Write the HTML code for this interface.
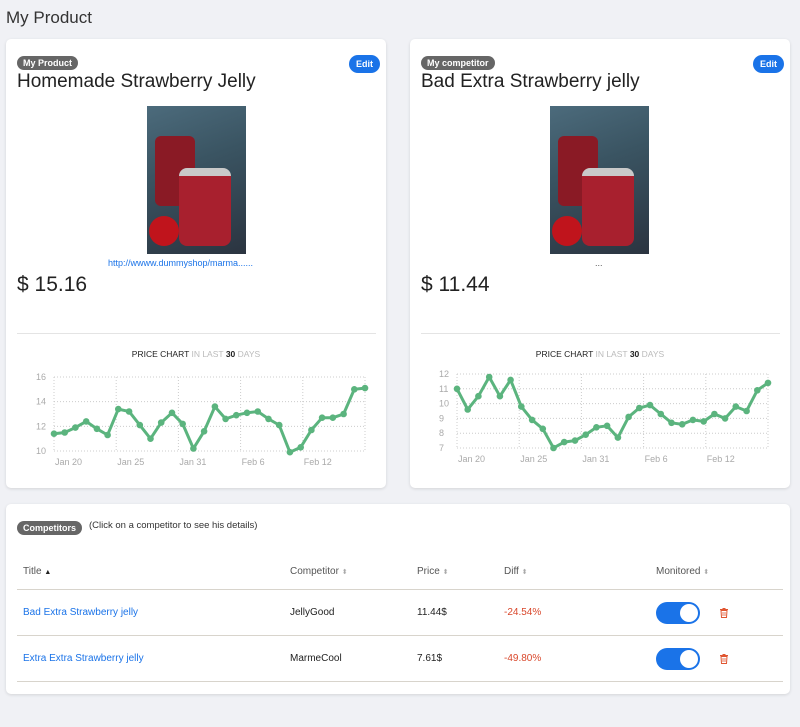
<!DOCTYPE html><html><head><meta charset="utf-8"><style>
body{margin:0;background:#f0f1f5;font-family:"Liberation Sans",sans-serif;width:800px;height:682px;overflow:hidden;position:relative;color:#222}
.h{position:absolute;left:6px;top:8px;font-size:17px;color:#333}
.card{position:absolute;background:#fff;border-radius:5px;box-shadow:0 1px 3px rgba(0,0,0,.12)}
.badge{position:absolute;background:#666;color:#fff;font-size:9px;font-weight:bold;border-radius:8px;padding:2px 6px}
.edit{position:absolute;background:#1a73e8;color:#fff;font-size:9px;font-weight:bold;border-radius:10px;padding:4px 7px}
.t{position:absolute;font-size:19px;color:#222}
.img{position:absolute;width:99px;height:148px;background:linear-gradient(160deg,#4c6b7c 0%,#3a5462 40%,#2b3440 100%);overflow:hidden}
.img .j1{position:absolute;left:8px;top:30px;width:40px;height:70px;background:#8a1a25;border-radius:6px}
.img .j2{position:absolute;left:32px;top:62px;width:52px;height:70px;background:#a8202e;border-radius:8px;border-top:8px solid #c9c9c9}
.img .s{position:absolute;left:2px;top:110px;width:30px;height:30px;background:#c0141c;border-radius:50%}
.price{position:absolute;font-size:21px}
.hr{position:absolute;height:1px;background:#e4e4e4}
.ct{position:absolute;font-size:8.5px;width:380px;text-align:center;color:#222}
.ct span{color:#bbb}
table{position:absolute;left:17px;top:553px;width:766px;border-collapse:collapse;font-size:10px}
td{height:45px;border-top:1px solid #d8d4cc;padding-left:6px;padding-top:0;padding-bottom:0}
th{height:34px;text-align:left;font-weight:normal;color:#555;padding-left:6px}
.tg{display:inline-block;width:44px;height:22px;background:#1a73e8;border-radius:11px;position:relative;vertical-align:middle}
.tg:after{content:"";position:absolute;right:2px;top:2px;width:18px;height:18px;border-radius:50%;background:#fff}
.tr{vertical-align:middle;margin-left:20px}
</style></head><body>
<div class="h">My Product</div>
<div class="card" style="left:6px;top:39px;width:380px;height:449px"></div>
<div class="card" style="left:410px;top:39px;width:380px;height:449px"></div>
<div class="card" style="left:6px;top:504px;width:784px;height:190px"></div>

<div class="badge" style="left:17px;top:56px">My Product</div>
<div class="edit" style="left:349px;top:55px">Edit</div>
<div class="t" style="left:17px;top:71px">Homemade Strawberry Jelly</div>
<div class="img" style="left:147px;top:106px"><div class="j1"></div><div class="j2"></div><div class="s"></div></div>
<div style="position:absolute;left:108px;top:258px;font-size:9px;color:#1a73e8">http://wwww.dummyshop/marma......</div>
<div class="price" style="left:17px;top:273px">$ 15.16</div>
<div class="hr" style="left:17px;top:333px;width:359px"></div>
<div class="ct" style="left:6px;top:349px">PRICE CHART <span>IN LAST</span> <b>30</b> <span>DAYS</span></div>

<div class="badge" style="left:421px;top:56px">My competitor</div>
<div class="edit" style="left:753px;top:55px">Edit</div>
<div class="t" style="left:421px;top:71px">Bad Extra Strawberry jelly</div>
<div class="img" style="left:550px;top:106px"><div class="j1"></div><div class="j2"></div><div class="s"></div></div>
<div style="position:absolute;left:595px;top:258px;font-size:9px;color:#555">...</div>
<div class="price" style="left:421px;top:273px">$ 11.44</div>
<div class="hr" style="left:421px;top:333px;width:359px"></div>
<div class="ct" style="left:410px;top:349px">PRICE CHART <span>IN LAST</span> <b>30</b> <span>DAYS</span></div>

<svg id="sv" width="800" height="682" style="position:absolute;left:0;top:0" font-family="Liberation Sans" font-size="9" fill="#aaa"></svg>

<div class="badge" style="left:17px;top:521px;font-weight:bold">Competitors</div>
<div style="position:absolute;left:89px;top:520px;font-size:9.5px;color:#333">(Click on a competitor to see his details)</div>
<table>
<tr><th style="width:260px">Title <span style="color:#222;font-size:7px">▲</span></th><th style="width:120px">Competitor <span style="color:#aaa;font-size:7px">⬍</span></th><th style="width:80px">Price <span style="color:#aaa;font-size:7px">⬍</span></th><th style="width:145px">Diff <span style="color:#aaa;font-size:7px">⬍</span></th><th>Monitored <span style="color:#aaa;font-size:7px">⬍</span></th></tr>
<tr><td style="color:#1a73e8">Bad Extra Strawberry jelly</td><td>JellyGood</td><td>11.44$</td><td style="color:#d9472b">-24.54%</td><td><span class="tg"></span><svg class="tr" width="8" height="10" viewBox="0 0 8 10"><path d="M0 1.5H8M3 1.5V0.5H5V1.5M1 2.5H7L6.5 9.5H1.5Z" fill="none" stroke="#e05530" stroke-width="1"/><path d="M3 4V8M5 4V8" stroke="#e05530" stroke-width=".8"/></svg></td></tr>
<tr><td style="color:#1a73e8">Extra Extra Strawberry jelly</td><td>MarmeCool</td><td>7.61$</td><td style="color:#d9472b">-49.80%</td><td><span class="tg"></span><svg class="tr" width="8" height="10" viewBox="0 0 8 10"><path d="M0 1.5H8M3 1.5V0.5H5V1.5M1 2.5H7L6.5 9.5H1.5Z" fill="none" stroke="#e05530" stroke-width="1"/><path d="M3 4V8M5 4V8" stroke="#e05530" stroke-width=".8"/></svg></td></tr>
<tr><td style="height:4px"></td><td></td><td></td><td></td><td></td></tr>
</table>
<script>
var s='';
function chart(x0,x1,yl,yt,yb,vmax,vmin,vals,xl,xs){
 for(var i=0;i<yl.length;i++){var y=yt+(yb-yt)*i/(yl.length-1);
  s+='<line x1="'+x0+'" x2="'+x1+'" y1="'+y+'" y2="'+y+'" stroke="#ccc" stroke-dasharray="1,2"/>';
  s+='<text x="'+(x0-18)+'" y="'+(y+3)+'">'+yl[i]+'</text>';}
 for(var i=0;i<6;i++){var x=x0+(x1-x0)*i/5;s+='<line x1="'+x+'" x2="'+x+'" y1="'+yt+'" y2="'+yb+'" stroke="#ccc" stroke-dasharray="1,2"/>';}
 for(var i=0;i<5;i++){s+='<text x="'+(x0+1+(x1-x0)*i/5)+'" y="'+(yb+14)+'">'+xl[i]+'</text>';}
 var p='',c='';
 for(var i=0;i<vals.length;i++){var x=x0+(x1-x0)*i/(vals.length-1),y=yt+(vmax-vals[i])/(vmax-vmin)*(yb-yt);p+=(i?'L':'M')+x.toFixed(1)+' '+y.toFixed(1);c+='<circle cx="'+x.toFixed(1)+'" cy="'+y.toFixed(1)+'" r="3.3" fill="#5bb47e"/>';}
 s+='<path d="'+p+'" fill="none" stroke="#5bb47e" stroke-width="3"/>'+c;
}
var xl=['Jan 20','Jan 25','Jan 31','Feb 6','Feb 12'];
chart(54,365,[16,14,12,10],377,451,16,10,[11.4,11.5,11.9,12.4,11.8,11.3,13.4,13.2,12.1,11,12.3,13.1,12.2,10.2,11.6,13.6,12.6,12.9,13.1,13.2,12.6,12.1,9.9,10.3,11.7,12.7,12.7,13,15,15.1],xl);
chart(457,768,[12,11,10,9,8,7],374,448,12,7,[11,9.6,10.5,11.8,10.5,11.6,9.8,8.9,8.3,7,7.4,7.5,7.9,8.4,8.5,7.7,9.1,9.7,9.9,9.3,8.7,8.6,8.9,8.8,9.3,9,9.8,9.5,10.9,11.4],xl);
document.getElementById('sv').innerHTML=s;
</script>
</body></html>
